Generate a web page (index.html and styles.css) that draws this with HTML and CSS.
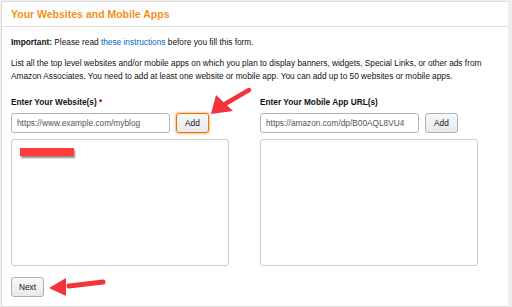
FILE: index.html
```html
<!DOCTYPE html>
<html>
<head>
  <meta charset="UTF-8">
  <title>Your Websites and Mobile Apps</title>
  <link rel="stylesheet" href="styles.css">
</head>
<body>
  <div class="panel">
    <div class="panel-head">
      <h2>Your Websites and Mobile Apps</h2>
    </div>
    <div class="panel-body">
      <p class="important"><b>Important:</b> Please read <a href="#">these instructions</a> before you fill this form.</p>
      <p class="intro">
        List all the top level websites and/or mobile apps on which you plan to display banners, widgets, Special Links, or other ads from
        Amazon Associates. You need to add at least one website or mobile app. You can add up to 50 websites or mobile apps.
      </p>

      <div class="columns">
        <!-- Websites -->
        <div class="col">
          <label for="site">Enter Your Website(s) <span class="req">*</span></label>
          <div class="add-row">
            <input type="text" id="site" placeholder="https://www.example.com/myblog">
            <button class="btn focus">Add</button>
          </div>
          <div class="list">
            <span class="redact"></span>
          </div>
        </div>

        <!-- Mobile apps -->
        <div class="col">
          <label for="app">Enter Your Mobile App URL(s)</label>
          <div class="add-row">
            <input type="text" id="app" placeholder="https://amazon.com/dp/B00AQL8VU4">
            <button class="btn">Add</button>
          </div>
          <div class="list"></div>
        </div>
      </div>

      <button class="btn next">Next</button>
    </div>

    <!-- annotation arrows -->
    <svg class="arrow arrow-add" width="50" height="36" viewBox="0 0 50 36">
      <path d="M42 5 L18 19" stroke="#f2333b" stroke-width="4.5" stroke-linecap="round" fill="none"/>
      <polygon points="4,29 9,10 26,26" fill="#f2333b"/>
    </svg>
    <svg class="arrow arrow-next" width="70" height="30" viewBox="0 0 70 30">
      <path d="M56 6 L22 10" stroke="#f2333b" stroke-width="5" stroke-linecap="round" fill="none"/>
      <polygon points="2,12 19,2 19,20" fill="#f2333b"/>
    </svg>
  </div>
</body>
</html>
```

FILE: styles.css
```css
body { margin: 1px 4px 0 1px; background: #eeeeee; font-family: "Liberation Sans", Arial, sans-serif; font-size: 8.3px; color: #111; }
.panel { position: relative; width: 506px; height: 304px; background: #fff; border: 1px solid #dddddd; }
.panel-head { height: 24px; border-bottom: 1px solid #dddddd; padding: 0 9px; display: flex; align-items: center; }
.panel-head h2 { margin: 0; font-size: 10.5px; font-weight: bold; color: #f39019; }
.panel-body { padding: 9px 9px 0 9px; }
p { margin: 0; line-height: 13px; }
.important { margin-bottom: 8px; }
.important a { color: #0066c0; text-decoration: none; }
.intro { width: 476px; margin-bottom: 13px; }
.columns { display: grid; grid-template-columns: 249px 249px; }
label { display: block; font-weight: bold; line-height: 13px; margin-bottom: 4px; }
.req { color: #c40000; }
.add-row { display: flex; gap: 6px; align-items: center; margin-bottom: 6px; }
input { width: 159px; height: 20px; box-sizing: border-box; padding: 0 5px; border: 1px solid #b5b5b5; border-radius: 3px; font-family: "Liberation Sans", Arial, sans-serif; font-size: 8.3px; color: #555; }
input::placeholder { color: #555; }
.btn { height: 20px; padding: 0 8px; border: 1px solid #adb1b8; border-radius: 3px; background: linear-gradient(#f7f8fa, #e7e9ec); font-family: "Liberation Sans", Arial, sans-serif; font-size: 8.3px; color: #111; }
.btn.focus { border-color: #e77600; box-shadow: 0 0 2px 1px rgba(228, 121, 17, 0.45); }
.list { position: relative; width: 218px; height: 127px; box-sizing: border-box; border: 1px solid #cccccc; border-radius: 3px; }
.redact { position: absolute; left: 8px; top: 8px; width: 54px; height: 8px; background: #ff3b3b; box-shadow: 1px 2px 2px rgba(0, 0, 0, 0.45); }
.next { margin-top: 11px; height: 20px; width: 33px; padding: 0; }
.arrow { position: absolute; }
.arrow-add { left: 205px; top: 83px; }
.arrow-next { left: 45px; top: 274px; }
```
